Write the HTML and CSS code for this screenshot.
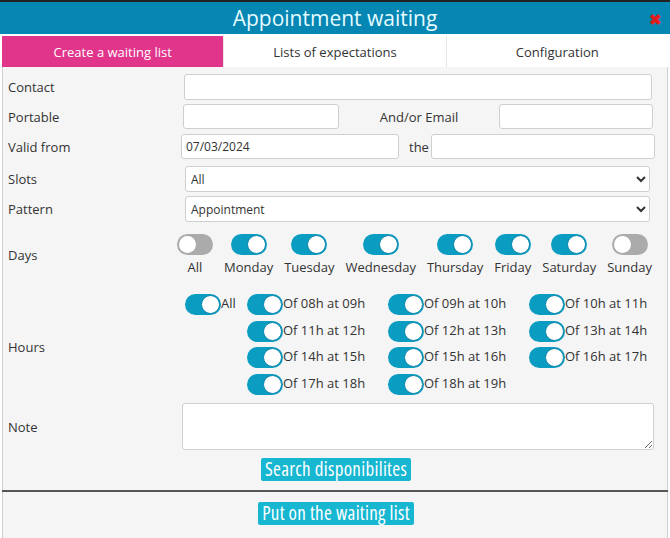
FILE: index.html
```html
<!DOCTYPE html>
<html lang="en">
<head>
<meta charset="UTF-8">
<title>Appointment waiting</title>
<link rel="stylesheet" href="styles.css">
</head>
<body>
<div class="dialog">
  <div class="titlebar">
    <span class="title">Appointment waiting</span>
    <span class="close">&#10006;</span>
  </div>
  <div class="tabs">
    <div class="tab active">Create a waiting list</div>
    <div class="tab">Lists of expectations</div>
    <div class="tab">Configuration</div>
  </div>
  <div class="panel">
    <div class="row r-contact">
      <label class="lbl">Contact</label>
      <input type="text" class="field contact">
    </div>
    <div class="row r-portable">
      <label class="lbl">Portable</label>
      <input type="text" class="field portable">
      <span class="mid">And/or Email</span>
      <input type="text" class="field email">
    </div>
    <div class="row r-valid">
      <label class="lbl">Valid from</label>
      <input type="text" class="field from" value="07/03/2024">
      <span class="the">the</span>
      <input type="text" class="field to">
    </div>
    <div class="row r-slots">
      <label class="lbl">Slots</label>
      <select class="field sel"><option>All</option></select>
    </div>
    <div class="row r-pattern">
      <label class="lbl">Pattern</label>
      <select class="field sel"><option>Appointment</option></select>
    </div>
    <div class="row r-days">
      <label class="lbl">Days</label>
      <div class="days">
        <div class="day"><span class="toggle"></span><span>All</span></div>
        <div class="day"><span class="toggle on"></span><span>Monday</span></div>
        <div class="day"><span class="toggle on"></span><span>Tuesday</span></div>
        <div class="day"><span class="toggle on"></span><span>Wednesday</span></div>
        <div class="day"><span class="toggle on"></span><span>Thursday</span></div>
        <div class="day"><span class="toggle on"></span><span>Friday</span></div>
        <div class="day"><span class="toggle on"></span><span>Saturday</span></div>
        <div class="day"><span class="toggle"></span><span>Sunday</span></div>
      </div>
    </div>
    <div class="row r-hours">
      <label class="lbl">Hours</label>
      <div class="hours">
        <div class="hour all"><span class="toggle on"></span>All</div>
        <div class="hour"><span class="toggle on"></span>Of 08h at 09h</div>
        <div class="hour"><span class="toggle on"></span>Of 09h at 10h</div>
        <div class="hour"><span class="toggle on"></span>Of 10h at 11h</div>
        <div class="hour"><span class="toggle on"></span>Of 11h at 12h</div>
        <div class="hour"><span class="toggle on"></span>Of 12h at 13h</div>
        <div class="hour"><span class="toggle on"></span>Of 13h at 14h</div>
        <div class="hour"><span class="toggle on"></span>Of 14h at 15h</div>
        <div class="hour"><span class="toggle on"></span>Of 15h at 16h</div>
        <div class="hour"><span class="toggle on"></span>Of 16h at 17h</div>
        <div class="hour"><span class="toggle on"></span>Of 17h at 18h</div>
        <div class="hour"><span class="toggle on"></span>Of 18h at 19h</div>
      </div>
    </div>
    <div class="row r-note">
      <label class="lbl">Note</label>
      <textarea class="field note"></textarea>
    </div>
    <div class="actions">
      <button class="btn">Search disponibilites</button>
    </div>
    <div class="sep"></div>
    <div class="actions bottom">
      <button class="btn">Put on the waiting list</button>
    </div>
  </div>
</div>
</body>
</html>
```

FILE: styles.css
```css
body {
  margin: 0;
  font-family: "Open Sans", Arial, sans-serif;
  font-size: 13px;
  color: #333;
  background: #fff;
}

.dialog {
  width: 670px;
  height: 538px;
  border-top: 2px solid #222;
  box-sizing: border-box;
  display: flex;
  flex-direction: column;
}

.titlebar {
  height: 32px;
  background: #0686b3;
  position: relative;
  display: flex;
  justify-content: center;
  align-items: center;
}

.title {
  color: #e4fbff;
  font-size: 21px;
}

.close {
  position: absolute;
  right: 8px;
  top: 7px;
  color: #e21c1c;
  font-size: 15px;
  font-weight: bold;
}

.tabs {
  display: flex;
  margin: 2px 2px 0 2px;
  height: 31px;
}

.tab {
  flex: 1;
  display: flex;
  align-items: center;
  justify-content: center;
  background: #fff;
  border-left: 1px solid #e6e6e6;
}

.tab.active {
  background: #e0358b;
  color: #fff;
  border-left: none;
}

.panel {
  flex: 1;
  margin: 0 2px;
  background: #f5f5f5;
  border-left: 1px solid #d0d0d0;
  border-right: 1px solid #d0d0d0;
}

.row {
  display: flex;
  align-items: center;
}

.lbl {
  width: 178px;
  padding-left: 5px;
  box-sizing: border-box;
  flex-shrink: 0;
}

.field {
  font-family: "Open Sans", Arial, sans-serif;
  font-size: 12px;
  color: #333;
  background: #fff;
  border: 1px solid #cfcfcf;
  border-radius: 3px;
  box-sizing: border-box;
  padding: 0 4px;
  height: 26px;
}

.r-contact { margin-top: 7px; }
.contact { width: 468px; margin-left: 3px; }

.r-portable { margin-top: 4px; }
.portable { width: 156px; margin-left: 2px; height: 25px; }
.mid { width: 160px; text-align: center; }
.email { width: 154px; height: 25px; }

.r-valid { margin-top: 5px; }
.from { width: 218px; height: 25px; }
.the { margin: 0 2px 0 10px; }
.to { width: 224px; height: 25px; }

.r-slots { margin-top: 7px; }
.r-pattern { margin-top: 4px; }
.sel { width: 465px; margin-left: 4px; padding: 0 1px; }

.r-days { margin-top: 12px; }
.days {
  display: flex;
  gap: 11px;
  margin-left: -4px;
}

.day {
  display: flex;
  flex-direction: column;
  align-items: center;
  gap: 3px;
  min-width: 36px;
}

.toggle {
  display: inline-block;
  width: 36px;
  height: 21px;
  border-radius: 11px;
  background: #ababab;
  position: relative;
  flex-shrink: 0;
}

.toggle::after {
  content: "";
  position: absolute;
  top: 2px;
  left: 2px;
  width: 17px;
  height: 17px;
  border-radius: 50%;
  background: #fff;
}

.toggle.on {
  background: #0b9cc2;
}

.toggle.on::after {
  left: auto;
  right: 1px;
  top: 1px;
  border: 1px solid #0b86aa;
}

.r-hours { margin-top: 18px; }
.hours {
  display: grid;
  grid-template-columns: 62px 141px 141px 141px;
  grid-auto-rows: 26.5px;
  margin-left: 4px;
}

.hour {
  display: flex;
  align-items: flex-start;
}

.hour.all {
  grid-row: 1 / span 4;
}

.r-note { margin-top: 3px; }
.note {
  width: 472px;
  height: 47px;
  margin-left: 1px;
  resize: both;
}

.actions {
  display: flex;
  justify-content: center;
  margin-top: 8px;
}

.btn {
  background: #17b6d1;
  color: #fff;
  border: none;
  border-radius: 2px;
  font-family: "Open Sans", sans-serif;
  font-stretch: 75%;
  font-size: 19px;
  letter-spacing: 0.3px;
  height: 23px;
  line-height: 23px;
  padding: 0 4px;
  margin-left: 2px;
}

.sep {
  margin-top: 9px;
  height: 2px;
  background: #555;
  margin-left: -1px;
  margin-right: -1px;
}

.bottom { margin-top: 10px; }
```
